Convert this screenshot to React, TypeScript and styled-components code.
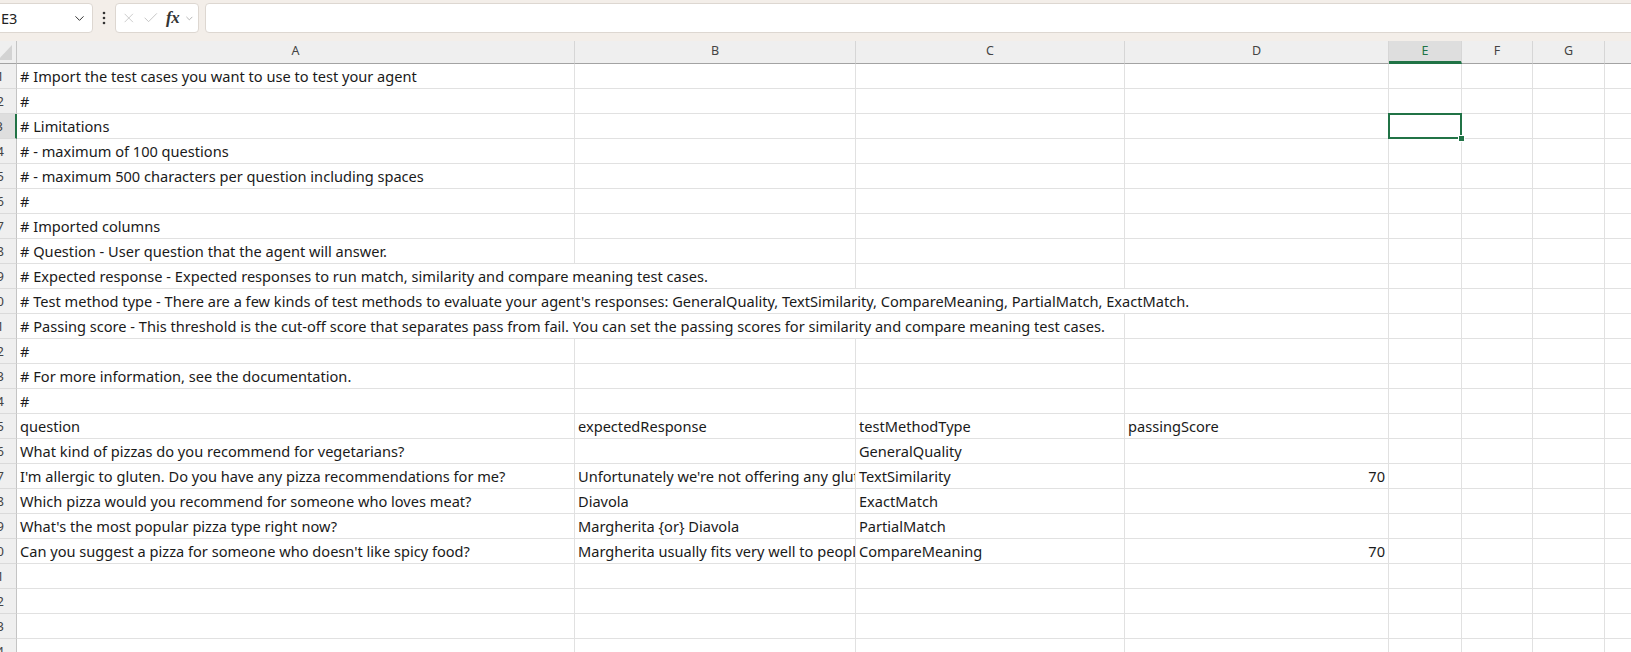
import React, { Fragment } from 'react';
import styled, { createGlobalStyle, css } from 'styled-components';
import { X, Check, ChevronDown } from 'lucide-react';

const GREEN = '#217346';
const GRID = '#e1e1e1';
const HEAD_BG = '#efefef';

const GlobalStyle = createGlobalStyle`
  html, body {
    margin: 0;
    padding: 0;
    background: #ffffff;
    overflow: hidden;
  }
  body {
    font-family: 'Noto Sans', 'Noto Sans CJK JP', sans-serif;
    color: #1f1f1f;
  }
`;

// the window is cropped a little on its left edge
const Viewport = styled.div`
  width: 1631px;
  height: 652px;
  overflow: hidden;
`;

const Window = styled.div`
  width: 1700px;
  margin-left: -28px;
`;

const FormulaBar = styled.div`
  height: 41px;
  box-sizing: border-box;
  padding: 3px 0 0 8px;
  background: #f3eee9;
  display: flex;
  align-items: flex-start;
`;

const boxStyle = css`
  height: 30px;
  box-sizing: border-box;
  background: #ffffff;
  border: 1px solid #ddd7d1;
  border-radius: 4px;
  display: flex;
  align-items: center;
`;

const NameBox = styled.div`
  ${boxStyle};
  width: 113px;
  padding: 0 5px 0 20px;
  justify-content: space-between;
  font-size: 14.5px;
  color: #222;
`;

const Dots = styled.div`
  width: 22px;
  height: 30px;
  display: flex;
  align-items: center;
  justify-content: center;
`;

const FxBox = styled.div`
  ${boxStyle};
  width: 84px;
  padding: 0 3px 0 5px;
  gap: 5px;
  color: #b9b9b9;
`;

const Fx = styled.span`
  font-family: 'Liberation Serif', 'DejaVu Serif', serif;
  font-style: italic;
  font-weight: 700;
  font-size: 17px;
  color: #333;
  margin-left: 2px;
  letter-spacing: -0.5px;
`;

const FormulaInput = styled.div`
  ${boxStyle};
  flex: 1;
  margin-left: 6px;
`;

const Sheet = styled.div<{ $cols: string }>`
  display: grid;
  grid-template-columns: ${(p) => p.$cols};
  grid-template-rows: 23px;
  grid-auto-rows: 25px;
`;

const Corner = styled.div`
  background: ${HEAD_BG};
  border-right: 1px solid #c4c4c4;
  border-bottom: 1px solid #a3a3a3;
  display: flex;
  align-items: flex-end;
  justify-content: flex-end;
  padding: 0 4px 3px 0;
`;

const ColHeader = styled.div<{ $active?: boolean }>`
  background: ${(p) => (p.$active ? '#dedede' : HEAD_BG)};
  border-right: 1px solid #d6d6d6;
  border-bottom: ${(p) => (p.$active ? `3px solid ${GREEN}` : '1px solid #a3a3a3')};
  font-size: 12.5px;
  line-height: 16px;
  padding-top: 2px;
  text-align: center;
  color: ${(p) => (p.$active ? GREEN : '#444')};
`;

const RowHeader = styled.div<{ $active?: boolean }>`
  background: ${(p) => (p.$active ? '#dedede' : HEAD_BG)};
  border-right: ${(p) => (p.$active ? `2px solid ${GREEN}` : '1px solid #c4c4c4')};
  border-bottom: 1px solid #dadada;
  font-size: 13px;
  line-height: 24px;
  text-align: right;
  padding-right: 12px;
  color: #444;
`;

const Cell = styled.div<{ $span?: number; $right?: boolean; $selected?: boolean }>`
  grid-column: span ${(p) => p.$span ?? 1};
  border-right: 1px solid ${GRID};
  border-bottom: 1px solid ${GRID};
  font-size: 14.6px;
  line-height: 24px;
  padding: 0 3px 0 3px;
  white-space: nowrap;
  overflow: hidden;
  text-align: ${(p) => (p.$right ? 'right' : 'left')};
  color: #1a1a1a;
  min-width: 0;
  ${(p) =>
    p.$selected &&
    css`
      position: relative;
      overflow: visible;
      &::after {
        content: '';
        position: absolute;
        inset: -1px -1px -1px -1px;
        border: 2px solid ${GREEN};
        z-index: 2;
      }
      &::before {
        content: '';
        position: absolute;
        right: -4px;
        bottom: -4px;
        width: 5px;
        height: 5px;
        background: ${GREEN};
        border: 1px solid #fff;
        z-index: 3;
      }
    `}
`;

const COLS = [558, 281, 269, 264, 73, 71, 72, 120];
const LETTERS = ['A', 'B', 'C', 'D', 'E', 'F', 'G', 'H'];

type Row = { cells: (string | number)[]; span?: number };

const rows: Row[] = [
  { cells: ['# Import the test cases you want to use to test your agent'] },
  { cells: ['#'] },
  { cells: ['# Limitations'] },
  { cells: ['# - maximum of 100 questions'] },
  { cells: ['# - maximum 500 characters per question including spaces'] },
  { cells: ['#'] },
  { cells: ['# Imported columns'] },
  { cells: ['# Question - User question that the agent will answer.'] },
  {
    cells: ['# Expected response - Expected responses to run match, similarity and compare meaning test cases.'],
    span: 2,
  },
  {
    cells: [
      "# Test method type - There are a few kinds of test methods to evaluate your agent's responses: GeneralQuality, TextSimilarity, CompareMeaning, PartialMatch, ExactMatch.",
    ],
    span: 4,
  },
  {
    cells: [
      '# Passing score - This threshold is the cut-off score that separates pass from fail. You can set the passing scores for similarity and compare meaning test cases.',
    ],
    span: 3,
  },
  { cells: ['#'] },
  { cells: ['# For more information, see the documentation.'] },
  { cells: ['#'] },
  { cells: ['question', 'expectedResponse', 'testMethodType', 'passingScore'] },
  { cells: ['What kind of pizzas do you recommend for vegetarians?', '', 'GeneralQuality', ''] },
  {
    cells: [
      "I'm allergic to gluten. Do you have any pizza recommendations for me?",
      "Unfortunately we're not offering any gluten-free pizzas at the moment.",
      'TextSimilarity',
      70,
    ],
  },
  { cells: ['Which pizza would you recommend for someone who loves meat?', 'Diavola', 'ExactMatch', ''] },
  { cells: ["What's the most popular pizza type right now?", 'Margherita {or} Diavola', 'PartialMatch', ''] },
  {
    cells: [
      "Can you suggest a pizza for someone who doesn't like spicy food?",
      'Margherita usually fits very well to people who prefer mild flavours.',
      'CompareMeaning',
      70,
    ],
  },
  { cells: [] },
  { cells: [] },
  { cells: [] },
  { cells: [] },
];

const SELECTED = { row: 3, col: 4 };

function VerticalDots() {
  return (
    <svg width="4" height="14" viewBox="0 0 4 14">
      <circle cx="2" cy="2" r="1.3" fill="#333" />
      <circle cx="2" cy="7" r="1.3" fill="#333" />
      <circle cx="2" cy="12" r="1.3" fill="#333" />
    </svg>
  );
}

function CornerTriangle() {
  return (
    <svg width="14" height="15" viewBox="0 0 14 15">
      <polygon points="14,0 14,15 0,15" fill="#d3d3d3" />
    </svg>
  );
}

export default function App() {
  const template = ['45px', ...COLS.map((w) => `${w}px`)].join(' ');

  return (
    <Viewport>
      <GlobalStyle />
      <Window>
        <FormulaBar>
          <NameBox>
            <span>E3</span>
            <ChevronDown size={15} strokeWidth={1.6} color="#333" />
          </NameBox>
          <Dots>
            <VerticalDots />
          </Dots>
          <FxBox>
            <X size={16} strokeWidth={1.1} />
            <Check size={18} strokeWidth={1.1} />
            <Fx>fx</Fx>
            <ChevronDown size={11} strokeWidth={1.4} color="#8a8a8a" />
          </FxBox>
          <FormulaInput />
        </FormulaBar>

        <Sheet $cols={template}>
          <Corner>
            <CornerTriangle />
          </Corner>
          {LETTERS.map((l, i) => (
            <ColHeader key={l} $active={i === SELECTED.col}>
              {l}
            </ColHeader>
          ))}

          {rows.map((row, ri) => {
            const rowNo = ri + 1;
            const out: React.ReactNode[] = [];
            let col = 0;
            while (col < LETTERS.length) {
              const value = row.cells[col] ?? '';
              const span = col === 0 && row.span ? row.span : 1;
              out.push(
                <Cell
                  key={col}
                  $span={span}
                  $right={typeof value === 'number'}
                  $selected={rowNo === SELECTED.row && col === SELECTED.col}
                >
                  {value}
                </Cell>,
              );
              col += span;
            }
            return (
              <Fragment key={rowNo}>
                <RowHeader $active={rowNo === SELECTED.row}>{rowNo}</RowHeader>
                {out}
              </Fragment>
            );
          })}
        </Sheet>
      </Window>
    </Viewport>
  );
}
